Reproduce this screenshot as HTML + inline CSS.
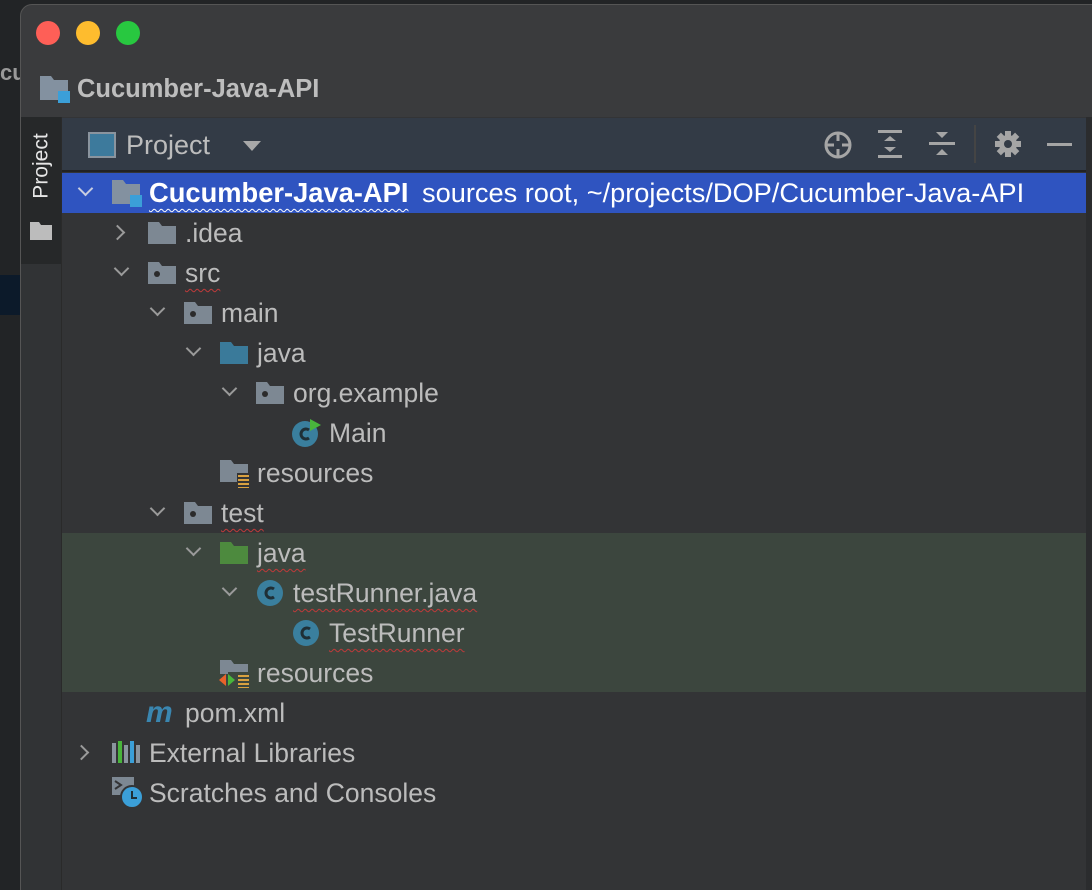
<!DOCTYPE html>
<html><head><meta charset="utf-8"><style>
*{margin:0;padding:0;box-sizing:border-box}
html,body{width:1092px;height:890px;overflow:hidden}
body{background:#222426;font-family:"Liberation Sans",sans-serif;position:relative}
.win{position:absolute;left:20px;top:4px;width:1090px;height:920px;background:#3a3b3d;border-radius:12px 0 0 0;border:1px solid #555}
.abs{position:absolute}
.t{position:absolute;font-size:26.5px;color:#bcbcbc;white-space:nowrap;line-height:40px}
.w{text-decoration:underline wavy #c03a3a;text-decoration-thickness:1px;text-underline-offset:6px}
.chev{position:absolute;width:11px;height:11px;border-right:2px solid #9a9a9a;border-bottom:2px solid #9a9a9a}
.down{transform:rotate(45deg)}
.right{transform:rotate(-45deg)}
</style></head><body>
<div class="abs" style="left:0;top:60px;width:20px;height:40px;color:#999;font-size:22px;font-weight:bold">cu</div>
<div class="abs" style="left:0;top:275px;width:20px;height:40px;background:#0c1a2a"></div>
<div class="win"></div>
<div class="abs" style="left:36px;top:21px;width:24px;height:24px;border-radius:50%;background:#fe5f57"></div>
<div class="abs" style="left:76px;top:21px;width:24px;height:24px;border-radius:50%;background:#febc2e"></div>
<div class="abs" style="left:116px;top:21px;width:24px;height:24px;border-radius:50%;background:#28c840"></div>
<svg class="abs" style="left:40px;top:76px" width="32" height="28"><path d="M0 0h11l3 4h14v20H0z" fill="#8391a0"/><rect x="18" y="15" width="12" height="12" fill="#3b9fd8"/></svg>
<div class="abs" style="left:77px;top:74px;font-size:25.5px;font-weight:bold;color:#bdbdbd;line-height:30px">Cucumber-Java-API</div>
<div class="abs" style="left:21px;top:117px;width:41px;height:800px;background:#313335;border-right:1px solid #2a2a2a"></div>
<div class="abs" style="left:21px;top:117px;width:40px;height:147px;background:#262829"></div>
<div class="abs" style="left:22px;top:120px;width:38px;height:95px;"><div style="position:absolute;left:-28px;top:34px;width:95px;transform:rotate(-90deg);color:#e6e6e6;font-size:21px;text-align:center">Project</div></div>
<svg class="abs" style="left:30px;top:222px" width="22" height="18"><path d="M0 0h9l2 3h11v15H0z" fill="#bcbcbc"/></svg>
<div class="abs" style="left:62px;top:117px;width:1030px;height:800px;background:#333436"></div>
<div class="abs" style="left:62px;top:118px;width:1030px;height:54px;background:#333b46;border-bottom:2px solid #222"></div>
<div class="abs" style="left:88px;top:132px;width:28px;height:26px;border:2px solid #8a949e;background:#3d7a9c"></div>
<div class="t" style="left:126px;top:125px;font-size:27px">Project</div>
<svg class="abs" style="left:243px;top:141px" width="18" height="10"><path d="M0 0h18L9 10z" fill="#a8a8a8"/></svg>
<svg class="abs" style="left:822px;top:129px" width="32" height="32" fill="none" stroke="#a5a5a5" stroke-width="3"><circle cx="16" cy="16" r="12"/><path d="M16 3v9M16 20v9M3 16h9M20 16h9"/></svg>
<svg class="abs" style="left:877px;top:130px" width="26" height="28" fill="#a5a5a5"><rect x="1" y="0" width="24" height="3"/><rect x="1" y="25" width="24" height="3"/><path d="M7 11l6-5 6 5zM7 17l6 5 6-5z"/></svg>
<svg class="abs" style="left:929px;top:130px" width="26" height="28" fill="#a5a5a5"><rect x="0" y="12" width="26" height="3"/><path d="M7 2l6 6 6-6zM7 25l6-6 6 6z"/></svg>
<div class="abs" style="left:974px;top:125px;width:2px;height:38px;background:#444"></div>
<svg class="abs" style="left:995px;top:131px" width="26" height="26"><g fill="#a5a5a5" transform="translate(13 13)"><circle r="9"/><rect x="-3" y="-13" width="6" height="26"/><rect x="-3" y="-13" width="6" height="26" transform="rotate(45)"/><rect x="-3" y="-13" width="6" height="26" transform="rotate(90)"/><rect x="-3" y="-13" width="6" height="26" transform="rotate(135)"/></g><circle cx="13" cy="13" r="4" fill="#333b46"/></svg>
<div class="abs" style="left:1047px;top:143px;width:25px;height:3px;background:#a5a5a5"></div>
<div class="abs" style="left:62px;top:173px;width:1024px;height:40px;background:#2f54c0"></div>
<div class="abs" style="left:62px;top:533px;width:1024px;height:159px;background:#3c463e"></div>
<div class="abs" style="left:1086px;top:117px;width:6px;height:800px;background:#2b2c2e"></div>

<div class="chev down" style="left:80px;top:183px;border-color:#c8cde0"></div>
<svg class="abs" style="left:112px;top:180px" width="32" height="28"><path d="M0 0h11l3 4h14v20H0z" fill="#8391a0"/><rect x="18" y="15" width="12" height="12" fill="#3b9fd8"/></svg>
<div class="t" style="left:149px;top:173px;color:#fff;font-weight:bold;font-size:27.3px"><span class="w" style="text-decoration-color:#fff">Cucumber-Java-API</span></div>
<div class="t" style="left:422px;top:173px;color:#fff;font-size:27.2px">sources root, ~/projects/DOP/Cucumber-Java-API</div>
<div class="chev right" style="left:112px;top:227px"></div>
<svg class="abs" style="left:148px;top:222px" width="28" height="22"><path d="M0 0h11l3 4h14v18H0z" fill="#7d8893"/></svg>
<div class="t" style="left:185px;top:213px">.idea</div>
<div class="chev down" style="left:116px;top:263px"></div>
<svg class="abs" style="left:148px;top:262px" width="28" height="22"><path d="M0 0h11l3 4h14v18H0z" fill="#7d8893"/><circle cx="9" cy="12" r="3" fill="#2b2b2b"/></svg>
<div class="t" style="left:185px;top:253px"><span class="w">src</span></div>
<div class="chev down" style="left:152px;top:303px"></div>
<svg class="abs" style="left:184px;top:302px" width="28" height="22"><path d="M0 0h11l3 4h14v18H0z" fill="#7d8893"/><circle cx="9" cy="12" r="3" fill="#2b2b2b"/></svg>
<div class="t" style="left:221px;top:293px">main</div>
<div class="chev down" style="left:188px;top:343px"></div>
<svg class="abs" style="left:220px;top:342px" width="28" height="22"><path d="M0 0h11l3 4h14v18H0z" fill="#3a7a9a"/></svg>
<div class="t" style="left:257px;top:333px">java</div>
<div class="chev down" style="left:224px;top:383px"></div>
<svg class="abs" style="left:256px;top:382px" width="28" height="22"><path d="M0 0h11l3 4h14v18H0z" fill="#7d8893"/><circle cx="9" cy="12" r="3" fill="#2b2b2b"/></svg>
<div class="t" style="left:293px;top:373px">org.example</div>
<svg class="abs" style="left:291px;top:418px" width="32" height="30"><circle cx="14" cy="16" r="13" fill="#3a7f9e"/><path d="M18 12a5 5 0 1 0 0 8" stroke="#1f2f36" stroke-width="3" fill="none"/><path d="M19 1l11 6-11 6z" fill="#49b53c"/></svg>
<div class="t" style="left:329px;top:413px">Main</div>
<svg class="abs" style="left:220px;top:460px" width="32" height="28"><path d="M0 0h11l3 4h14v18H0z" fill="#7d8893"/><rect x="17" y="13" width="13" height="14" fill="#333436"/><g fill="#d9a140"><rect x="18" y="15" width="11" height="2"/><rect x="18" y="19" width="11" height="2"/><rect x="18" y="23" width="11" height="2"/><rect x="18" y="27" width="11" height="1"/></g></svg>
<div class="t" style="left:257px;top:453px">resources</div>
<div class="chev down" style="left:152px;top:503px"></div>
<svg class="abs" style="left:184px;top:502px" width="28" height="22"><path d="M0 0h11l3 4h14v18H0z" fill="#7d8893"/><circle cx="9" cy="12" r="3" fill="#2b2b2b"/></svg>
<div class="t" style="left:221px;top:493px"><span class="w">test</span></div>
<div class="chev down" style="left:188px;top:543px"></div>
<svg class="abs" style="left:220px;top:542px" width="28" height="22"><path d="M0 0h11l3 4h14v18H0z" fill="#4d8a3e"/></svg>
<div class="t" style="left:257px;top:533px"><span class="w">java</span></div>
<div class="chev down" style="left:224px;top:583px"></div>
<svg class="abs" style="left:256px;top:579px" width="28" height="28"><circle cx="14" cy="14" r="13" fill="#3a7f9e"/><path d="M18 10a5 5 0 1 0 0 8" stroke="#1f2f36" stroke-width="3" fill="none"/></svg>
<div class="t" style="left:293px;top:573px"><span class="w">testRunner.java</span></div>
<svg class="abs" style="left:292px;top:619px" width="28" height="28"><circle cx="14" cy="14" r="13" fill="#3a7f9e"/><path d="M18 10a5 5 0 1 0 0 8" stroke="#1f2f36" stroke-width="3" fill="none"/></svg>
<div class="t" style="left:329px;top:613px"><span class="w">TestRunner</span></div>
<svg class="abs" style="left:219px;top:660px" width="34" height="28"><path d="M1 0h11l3 4h14v8H1z" fill="#7d8893"/><path d="M1 12h8v2H1z" fill="#7d8893"/><path d="M0 20l7-6v12z" fill="#e8622a"/><path d="M9 14l7 6-7 6z" fill="#49b53c"/><g fill="#d9a140"><rect x="19" y="15" width="11" height="2"/><rect x="19" y="19" width="11" height="2"/><rect x="19" y="23" width="11" height="2"/><rect x="19" y="27" width="11" height="1"/></g></svg>
<div class="t" style="left:257px;top:653px">resources</div>
<div class="abs" style="left:146px;top:693px;font-size:30px;font-weight:bold;font-style:italic;color:#3a86b0;line-height:40px">m</div>
<div class="t" style="left:185px;top:693px">pom.xml</div>
<div class="chev right" style="left:76px;top:747px"></div>
<svg class="abs" style="left:112px;top:741px" width="30" height="22"><rect x="0" y="2" width="4" height="20" fill="#8a949e"/><rect x="6" y="0" width="4" height="22" fill="#49b53c"/><rect x="12" y="4" width="4" height="18" fill="#8a949e"/><rect x="18" y="0" width="4" height="22" fill="#3b9fd8"/><rect x="24" y="4" width="4" height="18" fill="#8a949e"/></svg>
<div class="t" style="left:149px;top:733px">External Libraries</div>
<svg class="abs" style="left:112px;top:777px" width="32" height="32"><rect x="0" y="0" width="22" height="18" fill="#7d8893"/><path d="M3 4l6 4-6 4" stroke="#333436" stroke-width="2" fill="none"/><circle cx="20" cy="20" r="11" fill="#3b9fd8" stroke="#333436" stroke-width="2"/><path d="M20 14v7h5" stroke="#1f2f36" stroke-width="2" fill="none"/></svg>
<div class="t" style="left:149px;top:773px">Scratches and Consoles</div>
</body></html>
